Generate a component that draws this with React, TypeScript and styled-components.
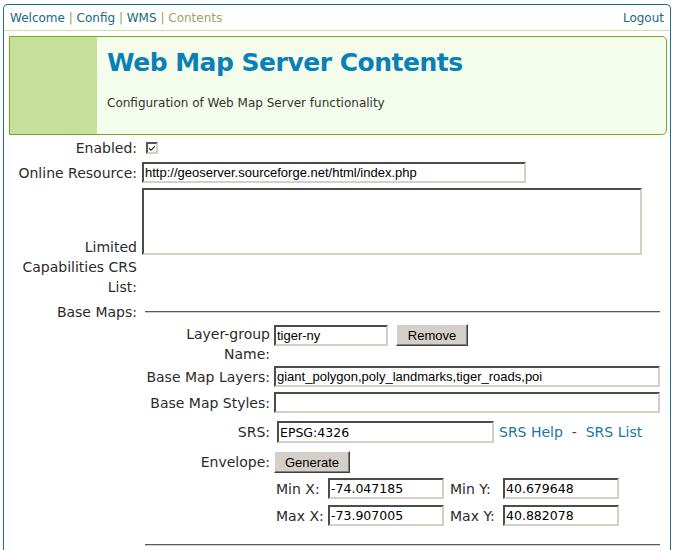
import React from 'react';
import styled, { createGlobalStyle } from 'styled-components';

const GlobalStyle = createGlobalStyle`
  html, body {
    margin: 0;
    padding: 0;
    background: #ffffff;
  }
  body {
    font-family: "DejaVu Sans", Verdana, sans-serif;
    color: #2b2b2b;
  }
`;

const App = () => {
  return (
    <>
      <GlobalStyle />
      <Frame>
        <NavBar>
          <Crumbs>
            <NavLink href="#">Welcome</NavLink>
            <Sep> | </Sep>
            <NavLink href="#">Config</NavLink>
            <Sep> | </Sep>
            <NavLink href="#">WMS</NavLink>
            <Sep> | </Sep>
            <Current>Contents</Current>
          </Crumbs>
          <NavLink href="#">Logout</NavLink>
        </NavBar>

        <Banner>
          <BannerSide />
          <BannerBody>
            <Title>Web Map Server Contents</Title>
            <Subtitle>Configuration of Web Map Server functionality</Subtitle>
          </BannerBody>
        </Banner>

        <Form>
          <Row $gap={0}>
            <Label>Enabled:</Label>
            <Field>
              <CheckBox>
                <svg width="8" height="8" viewBox="0 0 8 8">
                  <path d="M1 3.5 L3 5.5 L7 1.5 L7 3 L3 7 L1 5 Z" fill="#111" />
                </svg>
              </CheckBox>
            </Field>
          </Row>
          <Row $gap={4}>
            <Label>Online Resource:</Label>
            <Field>
              <TextInput $w={384} defaultValue="http://geoserver.sourceforge.net/html/index.php" />
            </Field>
          </Row>
          <Row $gap={5}>
            <Label $top={49}>Limited Capabilities CRS List:</Label>
            <Field $start>
              <TextArea />
            </Field>
          </Row>
          <Row $gap={5}>
            <Label $top={0}>Base Maps:</Label>
            <Section>
              <Rule $top={9} />
              <Row $inner $gap={11}>
                <Label $top={0}>Layer-group Name:</Label>
                <Field $start>
                  <TextInput $w={114} $top={1} defaultValue="tiger-ny" />
                  <Button $w={72}>Remove</Button>
                </Field>
              </Row>
              <Row $inner $gap={2}>
                <Label>Base Map Layers:</Label>
                <Field>
                  <TextInput defaultValue="giant_polygon,poly_landmarks,tiger_roads,poi" />
                </Field>
              </Row>
              <Row $inner $gap={5}>
                <Label>Base Map Styles:</Label>
                <Field>
                  <TextInput defaultValue="" />
                </Field>
              </Row>
              <Row $inner $gap={8}>
                <Label>SRS:</Label>
                <Field $gap={5}>
                  <TextInput $w={217} $h={22} $left={3} $face="dejavu" defaultValue="EPSG:4326" />
                  <Links>
                    <LinkText href="#">SRS Help</LinkText>
                    {'\u00a0\u00a0-\u00a0\u00a0'}
                    <LinkText href="#">SRS List</LinkText>
                  </Links>
                </Field>
              </Row>
              <Row $inner $gap={8}>
                <Label>Envelope:</Label>
                <Field>
                  <Button $w={76}>Generate</Button>
                </Field>
              </Row>
              <Row $inner $gap={5}>
                <span />
                <Coords>
                  <CoordLabel>Min X:</CoordLabel>
                  <TextInput $face="dejavu" defaultValue="-74.047185" />
                  <CoordLabel>Min Y:</CoordLabel>
                  <TextInput $face="dejavu" defaultValue="40.679648" />
                  <CoordLabel>Max X:</CoordLabel>
                  <TextInput $face="dejavu" defaultValue="-73.907005" />
                  <CoordLabel>Max Y:</CoordLabel>
                  <TextInput $face="dejavu" defaultValue="40.882078" />
                </Coords>
              </Row>
              <Rule $top={18} />
            </Section>
          </Row>
        </Form>
      </Frame>
    </>
  );
};

export default App;

const Frame = styled.div`
  box-sizing: border-box;
  width: 668px;
  min-height: 600px;
  margin: 4px 0 0 3px;
  border: 1px solid #1b6e8f;
  border-bottom: none;
  border-radius: 5px 5px 0 0;
`;

const NavBar = styled.div`
  display: flex;
  align-items: center;
  justify-content: space-between;
  height: 25px;
  padding: 0 6px 0 6px;
  border-bottom: 1px solid #c9e3a4;
  font-size: 12px;
`;

const Crumbs = styled.div`
  white-space: pre;
`;

const NavLink = styled.a`
  color: #20697c;
  text-decoration: none;
`;

const Sep = styled.span`
  color: #8ea35e;
`;

const Current = styled.span`
  color: #93a868;
`;

const Banner = styled.div`
  display: flex;
  box-sizing: border-box;
  height: 99px;
  margin: 5px 3px 0 5px;
  border: 1px solid #6cb01c;
  border-radius: 0 5px 5px 0;
  background: #f4fdeb;
  overflow: hidden;
`;

const BannerSide = styled.div`
  flex: none;
  width: 87px;
  background: #c6df9b;
`;

const BannerBody = styled.div`
  padding: 11px 0 0 10px;
`;

const Title = styled.h1`
  margin: 0;
  font-size: 25px;
  line-height: 30px;
  letter-spacing: -0.5px;
  font-weight: bold;
  color: #0a80b6;
`;

const Subtitle = styled.p`
  margin: 17px 0 0;
  font-size: 12px;
  line-height: 16px;
  color: #333333;
`;

const Form = styled.div`
  padding: 3px 0 0 5px;
`;

const Row = styled.div<{ $gap?: number; $inner?: boolean }>`
  display: grid;
  grid-template-columns: ${(p) => (p.$inner ? '125px 1fr' : '128px 1fr')};
  column-gap: ${(p) => (p.$inner ? 4 : 5)}px;
  align-items: center;
  margin-top: ${(p) => p.$gap ?? 0}px;
`;

const Label = styled.div<{ $top?: number }>`
  font-size: 14px;
  line-height: 20px;
  text-align: right;
  color: #2b2b2b;
  align-self: ${(p) => (p.$top !== undefined ? 'start' : 'center')};
  margin-top: ${(p) => p.$top ?? 0}px;
`;

const Field = styled.div<{ $start?: boolean; $gap?: number }>`
  display: flex;
  align-items: ${(p) => (p.$start ? 'flex-start' : 'center')};
  align-self: ${(p) => (p.$start ? 'start' : 'center')};
  gap: ${(p) => p.$gap ?? 8}px;
  min-width: 0;
`;

const CheckBox = styled.span`
  box-sizing: border-box;
  display: flex;
  align-items: center;
  justify-content: center;
  width: 12px;
  height: 12px;
  margin-left: 4px;
  border: 2px solid;
  border-color: #555555 #d4d0c8 #d4d0c8 #555555;
  background: #ffffff;
`;

const TextInput = styled.input<{ $w?: number; $h?: number; $top?: number; $left?: number; $face?: string }>`
  box-sizing: border-box;
  flex: ${(p) => (p.$w ? 'none' : '1')};
  width: ${(p) => (p.$w ? `${p.$w}px` : '100%')};
  height: ${(p) => p.$h ?? 21}px;
  margin: ${(p) => p.$top ?? 0}px 0 0 ${(p) => p.$left ?? 0}px;
  padding: 0 1px;
  border: 2px solid;
  border-color: #4c4c4c #d4d0c8 #d4d0c8 #4c4c4c;
  background: #ffffff;
  color: #000000;
  font-family: ${(p) => (p.$face === 'dejavu' ? '"DejaVu Sans", Verdana, sans-serif' : '"Liberation Sans", Arial, sans-serif')};
  font-size: ${(p) => (p.$face === 'dejavu' ? '12.5px' : '13px')};
  outline: none;
`;

const TextArea = styled.textarea`
  box-sizing: border-box;
  display: block;
  width: 500px;
  height: 67px;
  margin: 0;
  padding: 1px;
  border: 2px solid;
  border-color: #4c4c4c #d4d0c8 #d4d0c8 #4c4c4c;
  resize: none;
  outline: none;
`;

const Button = styled.button<{ $w: number }>`
  box-sizing: border-box;
  flex: none;
  width: ${(p) => p.$w}px;
  height: 22px;
  padding: 0;
  border: 1px solid;
  border-color: #ffffff #404040 #404040 #ffffff;
  box-shadow: inset -1px -1px 0 #808080;
  background: #d4d0c8;
  color: #000000;
  font-family: "Liberation Sans", Arial, sans-serif;
  font-size: 13px;
`;

const Section = styled.div`
  align-self: start;
  padding: 0 10px 0 3px;
`;

const Rule = styled.hr<{ $top: number }>`
  height: 0;
  margin: ${(p) => p.$top}px 0 0;
  border: 0;
  border-top: 1px solid #5a5a5a;
  border-bottom: 1px solid #d0d0d0;
`;

const Links = styled.span`
  font-size: 14px;
  line-height: 20px;
  color: #444444;
  white-space: nowrap;
`;

const LinkText = styled.a`
  color: #1677a6;
  text-decoration: none;
`;

const Coords = styled.div`
  display: grid;
  grid-template-columns: 50px 116px 51px 116px;
  column-gap: 4px;
  row-gap: 6px;
  align-items: center;
`;

const CoordLabel = styled.span`
  padding-left: 2px;
  font-size: 14px;
  line-height: 20px;
  color: #2b2b2b;
  white-space: nowrap;
`;
